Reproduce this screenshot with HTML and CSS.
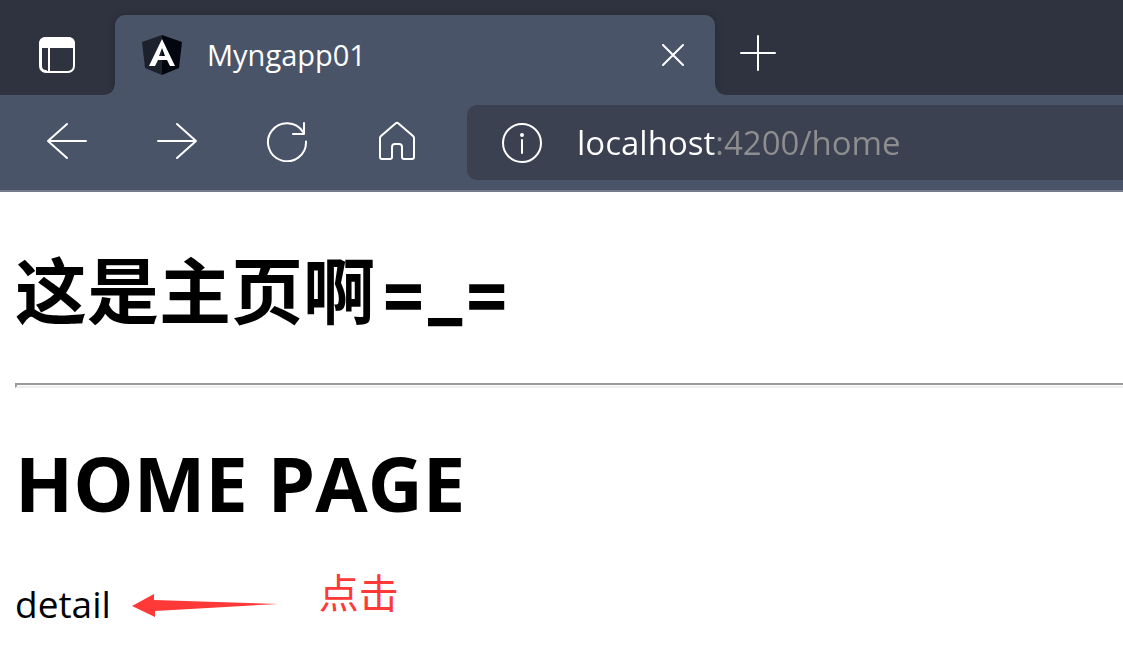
FILE: index.html
```html
<!DOCTYPE html>
<html lang="zh-CN">
<head>
<meta charset="utf-8">
<title>Myngapp01</title>
<link rel="stylesheet" href="styles.css">
</head>
<body>
<header class="browser">
  <div class="tab-strip">
    <button class="icon-button tab-actions" aria-label="Tab actions">
      <svg width="36" height="36" viewBox="0 0 36 36">
        <rect x="1" y="1" width="34" height="34" rx="6" fill="none" stroke="#fff" stroke-width="2"/>
        <path d="M1 10V7q0-6 6-6h22q6 0 6 6v3z" fill="#fff"/>
        <path d="M2 9v20q0 5 5 5M10 10v24" fill="none" stroke="#fff" stroke-width="2"/>
      </svg>
    </button>
    <div class="tab">
      <svg class="favicon" width="40" height="40" viewBox="0 0 40 40">
        <path d="M20 0 0 7l3 26 17 7z" fill="#1d212c"/>
        <path d="m20 0 20 7-3 26-17 7z" fill="#03050f"/>
        <path fill-rule="evenodd" d="M20 4 7 31h6l3-6h9l3 6h5zM20 13l3 8h-6z" fill="#fff"/>
      </svg>
      <span class="tab-title">Myngapp01</span>
      <button class="icon-button tab-close" aria-label="Close tab">
        <svg width="22" height="22" viewBox="0 0 22 22"><path d="m1 1 20 20M21 1 1 21"/></svg>
      </button>
    </div>
    <button class="icon-button new-tab" aria-label="New tab">
      <svg width="36" height="36" viewBox="0 0 36 36"><path d="M18 1v34M1 18h34"/></svg>
    </button>
  </div>
  <div class="toolbar">
    <nav class="nav-buttons">
      <button class="icon-button" aria-label="Back">
        <svg width="42" height="42" viewBox="0 0 42 42"><path d="M21 4 2 21l19 17M2 21h38"/></svg>
      </button>
      <button class="icon-button" aria-label="Forward">
        <svg width="42" height="42" viewBox="0 0 42 42"><path d="m21 4 19 17-19 17M40 21H2"/></svg>
      </button>
      <button class="icon-button" aria-label="Refresh">
        <svg width="42" height="42" viewBox="0 0 42 42"><path d="M40 21.500A19 19 0 1 1 37 12M38 3v11H27"/></svg>
      </button>
      <button class="icon-button" aria-label="Home">
        <svg width="42" height="42" viewBox="0 0 42 42"><path d="M19.500 3.500Q21 2 22.500 3.500L37 16q1 1 1 2v19q0 2-2 2h-8q-2 0-2-2V27q0-3-3-3h-4q-3 0-3 3v10q0 2-2 2H6q-2 0-2-2V18q0-1 1-2z"/></svg>
      </button>
    </nav>
    <div class="address">
      <button class="icon-button" aria-label="Site information">
        <svg width="42" height="42" viewBox="0 0 42 42"><circle cx="21" cy="21" r="19"/><path d="M21 18v13"/><circle cx="21" cy="13" r="1"/></svg>
      </button>
      <input class="address-input" type="text" aria-label="Address" value="localhost:4200/home">
    </div>
  </div>
</header>
<main class="page">
  <h1 class="heading heading-cn">这是主页啊<span class="face">=_=</span></h1>
  <hr class="rule">
  <h1 class="heading heading-en">HOME PAGE</h1>
  <div class="detail-row">
    <a class="detail" href="#detail">detail</a>
    <svg class="arrow" width="146" height="24" viewBox="0 0 146 24"><path d="m0 12 22-12v6l124 4-123 7v6z" fill="#ff3838"/></svg>
    <span class="hint">点击</span>
  </div>
</main>
</body>
</html>
```
FILE: styles.css
```css
* {
  box-sizing: border-box;
}

body {
  margin: 0;
  background: #fff;
  color: #000;
  font-family: "Open Sans", "Noto Sans CJK SC", sans-serif;
  overflow-x: hidden;
}

.browser {
  background: #4a5468;
  border-bottom: 2px solid #747c8c;
  color: #fff;
}

.icon-button {
  display: flex;
  align-items: center;
  justify-content: center;
  flex: none;
  padding: 0;
  border: 0;
  background: none;
  color: inherit;
}

.icon-button svg {
  fill: none;
  stroke: #fff;
  stroke-width: 2;
  stroke-linecap: round;
  stroke-linejoin: round;
}

.tab-strip {
  display: flex;
  align-items: flex-end;
  height: 95px;
  padding-top: 15px;
  background: #2e333f;
}

.tab-actions {
  width: 115px;
  height: 80px;
  padding-right: 1px;
}

.tab {
  position: relative;
  display: flex;
  align-items: center;
  flex: 0 1 600px;
  height: 80px;
  padding: 0 31px 0 27px;
  border-radius: 10px 10px 0 0;
  background: #4a5468;
  box-shadow: 0 0 8px rgba(0, 0, 0, 0.2);
  clip-path: inset(-10px -10px 0 -10px);
}

.tab::before,
.tab::after {
  content: "";
  position: absolute;
  bottom: 0;
  width: 10px;
  height: 10px;
}

.tab::before {
  right: 100%;
  background: radial-gradient(circle at 0 0, transparent 9px, #4a5468 10px);
}

.tab::after {
  left: 100%;
  background: radial-gradient(circle at 100% 0, transparent 9px, #4a5468 10px);
}

.tab-title {
  flex: 1;
  margin-left: 25px;
  font-size: 29px;
  line-height: 40px;
}

.new-tab {
  width: 86px;
  height: 80px;
  padding-bottom: 4px;
}

.toolbar {
  display: flex;
  align-items: center;
  height: 95px;
}

.nav-buttons {
  display: flex;
  flex: none;
  padding: 0 15px 4px 12px;
}

.nav-buttons .icon-button {
  width: 110px;
  height: 76px;
}

.address {
  display: flex;
  align-items: center;
  flex: 1;
  min-width: 0;
  height: 75px;
  padding-left: 34px;
  border-radius: 10px 0 0 10px;
  background: #3c4152;
}

.address-input {
  flex: 1;
  min-width: 0;
  height: 60px;
  margin-left: 34px;
  padding: 0;
  border: 0;
  outline: 0;
  background: linear-gradient(to right, #fff 139px, #8e8e8e 139px);
  background-clip: text;
  -webkit-background-clip: text;
  color: transparent;
  font: 33px "Open Sans", sans-serif;
}

.page {
  padding: 45px 0 0 15px;
}

.heading {
  margin: 0;
  font-weight: 700;
  line-height: 100px;
}

.heading-cn {
  font-family: "Noto Sans CJK SC", sans-serif;
  font-size: 72px;
}

.face {
  margin-left: 4px;
  font-family: Inter, sans-serif;
  line-height: 1;
}

.rule {
  height: 5px;
  margin: 46px 0 45px;
  border: solid;
  border-width: 2px 0 2px 2px;
  border-color: #9a9a9a #eee #eee #9a9a9a;
}

.heading-en {
  font-size: 76px;
}

.detail-row {
  display: flex;
  align-items: center;
  margin-top: 28px;
}

.detail {
  color: inherit;
  font-size: 37px;
  line-height: 60px;
  text-decoration: none;
}

.arrow {
  margin: 4px 0 0 21px;
}

.hint {
  margin: 0 0 26px 41px;
  color: #ff3838;
  font-family: "Noto Sans CJK SC", sans-serif;
  font-size: 40px;
  line-height: 60px;
}
```
